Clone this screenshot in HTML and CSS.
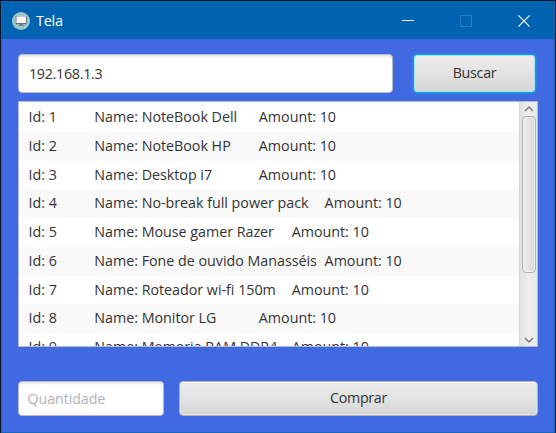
FILE: index.html
```html
<!DOCTYPE html>
<html lang="pt-BR">
<head>
<meta charset="utf-8">
<title>Tela</title>
<link rel="stylesheet" href="styles.css">
</head>
<body>
<div class="window">
  <header class="titlebar">
    <svg class="app-icon" width="18" height="18" viewBox="0 0 18 18"><circle cx="9" cy="9" r="9" fill="#9bc8cd"/><rect x="3.7" y="4" width="11" height="8.2" rx=".7" fill="#59636b"/><rect x="4.4" y="4.3" width="9.6" height="6.8" fill="#f7f5f3"/><path d="M8 12.2h2.4v.8h1.4v.8H6.6V13H8z" fill="#596c73"/></svg>
    <h1 class="title">Tela</h1>
    <div class="controls">
      <svg width="12" height="12" viewBox="0 0 12 12"><path d="M0 5.5h12" stroke="#fff"/></svg>
      <svg width="12" height="12" viewBox="0 0 12 12"><rect x=".5" y=".5" width="11" height="11" fill="none" stroke="#2b80c4"/></svg>
      <svg width="12" height="12" viewBox="0 0 12 12"><path d="M.4.4l11.2 11.2M11.6.4L.4 11.6" stroke="#fff" stroke-width="1.1"/></svg>
    </div>
  </header>
  <main class="content">
    <div class="search-row">
      <input class="field" value="192.168.1.3" aria-label="IP">
      <button class="button focused">Buscar</button>
    </div>
    <div class="list">
      <ul class="items">
        <li>Id: 1&#9;&#9;Name: NoteBook Dell&#9;Amount: 10</li>
        <li>Id: 2&#9;&#9;Name: NoteBook HP&#9;Amount: 10</li>
        <li>Id: 3&#9;&#9;Name: Desktop i7&#9;&#9;Amount: 10</li>
        <li>Id: 4&#9;&#9;Name: No-break full power pack&#9;Amount: 10</li>
        <li>Id: 5&#9;&#9;Name: Mouse gamer Razer&#9;Amount: 10</li>
        <li>Id: 6&#9;&#9;Name: Fone de ouvido Manasséis&#9;Amount: 10</li>
        <li>Id: 7&#9;&#9;Name: Roteador wi-fi 150m&#9;Amount: 10</li>
        <li>Id: 8&#9;&#9;Name: Monitor LG&#9;&#9;Amount: 10</li>
        <li>Id: 9&#9;&#9;Name: Memoria RAM DDR4&#9;Amount: 10</li>
      </ul>
      <div class="scrollbar">
        <svg width="10" height="6" viewBox="0 0 10 6"><path d="M1 5l4-4 4 4" fill="none" stroke="#777" stroke-width="1.4"/></svg>
        <div class="track"><div class="thumb"></div></div>
        <svg width="10" height="6" viewBox="0 0 10 6"><path d="M1 1l4 4 4-4" fill="none" stroke="#777" stroke-width="1.4"/></svg>
      </div>
    </div>
    <div class="buy-row">
      <input class="field" placeholder="Quantidade" aria-label="Quantidade">
      <button class="button">Comprar</button>
    </div>
  </main>
</div>
</body>
</html>
```
FILE: styles.css
```css
* { box-sizing: border-box; }
body { margin: 0; font: 14.3px "Open Sans", "Noto Sans", sans-serif; letter-spacing: -0.3px; color: #333; }
.window {
  width: 556px; height: 433px; overflow: hidden;
  border: 1px solid #08152f; border-right-color: #00152f; border-bottom: 0;
  background: #4169e1;
  display: flex; flex-direction: column;
}
.titlebar {
  height: 38px; flex: none; background: #0063b1;
  border-top: 1px solid #0a64ab; border-left: 1px solid #1768ad; border-right: 1px solid #1768ad;
  display: flex; align-items: center; padding: 0 24px 0 10px;
}
.app-icon { margin-top: 1px; }
.title { margin: 0 0 0 6px; font-size: 14.5px; font-weight: 400; color: #fff; }
.controls { margin-left: auto; display: flex; gap: 46px; }
.controls svg { display: block; }
.content {
  flex: 1; padding: 15px 17px 0 16px;
  border: solid #1768b8; border-width: 0 1px 1px;
  display: flex; flex-direction: column;
}
.search-row { display: grid; grid-template-columns: 375px 123px; gap: 20px; height: 39px; flex: none; }
.field {
  width: 100%; height: 100%; border: 1px solid #b7bac5; border-radius: 4px; background: #fff;
  box-shadow: inset 0 2px 2px #e8e8e8;
  padding: 0 10px; font: inherit; letter-spacing: inherit; color: #333; outline: 0;
}
.field::placeholder { color: #b3b3b3; opacity: 1; }
.button {
  border: 1px solid #b3b3b7; border-radius: 4px; padding: 0 0 2px;
  font: inherit; letter-spacing: inherit; color: #333;
  background: linear-gradient(#eee, #d6d6d6);
  box-shadow: inset 0 1px #fbfbfb, inset 0 0 0 1px #e4e4e4;
}
.focused { border-color: #03a6d6; box-shadow: inset 0 0 0 1px #a5dfe9, 0 0 2px #00b7db; }
.list {
  width: 520px; height: 246px; margin-top: 8px; flex: none;
  border: 1px solid #b8bac5; background: #fff; overflow: hidden;
  display: grid; grid-template-columns: 1fr 18px;
}
.items { margin: 0; padding: 1px 0 0; list-style: none; min-height: 0; }
.items li {
  height: 28.75px; line-height: 28.75px; padding-left: 9.5px;
  white-space: pre; tab-size: 32.9px; letter-spacing: -0.02px;
}
.items li:nth-child(even) { background: #f9f9f9; }
.scrollbar {
  height: 244px; border-left: 1px solid #d8d8d8;
  background: linear-gradient(90deg, #e2e2e2, #eee 50%, #e9e9e9);
  display: flex; flex-direction: column; align-items: center; padding: 4px 0 3px;
}
.scrollbar svg { display: block; flex: none; }
.track { flex: 1; width: 100%; padding: 4px 1px 0 2px; }
.thumb {
  height: 157px; border: 1px solid #b0b0b0; border-radius: 4px;
  background: linear-gradient(90deg, #eee, #dadada); box-shadow: inset 0 0 0 1px #f1f1f1;
}
.buy-row { display: grid; grid-template-columns: 146px 359px; gap: 15px; height: 35px; margin-top: 34px; flex: none; }
.buy-row .field { padding-left: 8.5px; letter-spacing: -0.1px; }
```
